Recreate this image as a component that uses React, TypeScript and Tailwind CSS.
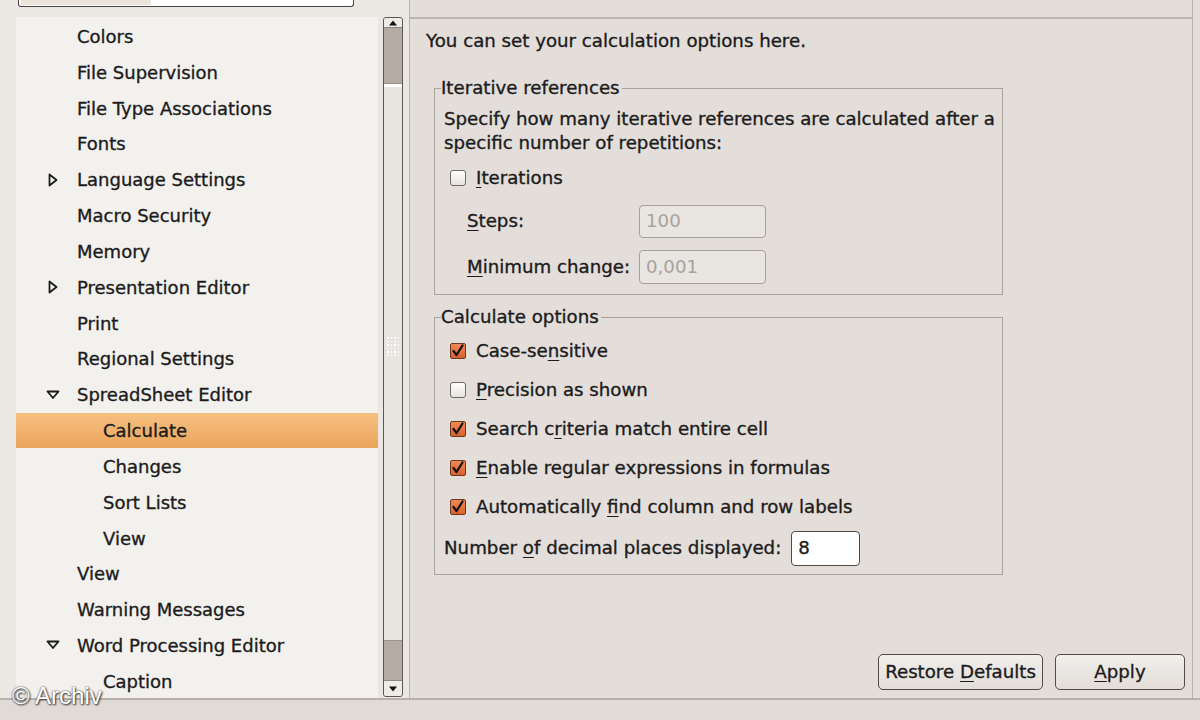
import React from "react";

const treeItems: { label: string; level: number; exp?: "right" | "down"; selected?: boolean }[] = [
  { label: "Colors", level: 1 },
  { label: "File Supervision", level: 1 },
  { label: "File Type Associations", level: 1 },
  { label: "Fonts", level: 1 },
  { label: "Language Settings", level: 1, exp: "right" },
  { label: "Macro Security", level: 1 },
  { label: "Memory", level: 1 },
  { label: "Presentation Editor", level: 1, exp: "right" },
  { label: "Print", level: 1 },
  { label: "Regional Settings", level: 1 },
  { label: "SpreadSheet Editor", level: 1, exp: "down" },
  { label: "Calculate", level: 2, selected: true },
  { label: "Changes", level: 2 },
  { label: "Sort Lists", level: 2 },
  { label: "View", level: 2 },
  { label: "View", level: 1 },
  { label: "Warning Messages", level: 1 },
  { label: "Word Processing Editor", level: 1, exp: "down" },
  { label: "Caption", level: 2 },
];

function Expander({ dir }: { dir: "right" | "down" }) {
  return (
    <svg width="14" height="14" viewBox="0 0 14 14" className="shrink-0">
      {dir === "right" ? (
        <path d="M3.5 1.5 L10.5 7 L3.5 12.5 Z" fill="none" stroke="#1a1a1a" strokeWidth="1.8" strokeLinejoin="round" />
      ) : (
        <path d="M1.5 3.5 L12.5 3.5 L7 10 Z" fill="none" stroke="#1a1a1a" strokeWidth="1.8" strokeLinejoin="round" />
      )}
    </svg>
  );
}

function CheckBox({ checked }: { checked?: boolean }) {
  if (checked) {
    return (
      <div className="w-[16px] h-[16px] shrink-0 rounded-[2px] border border-[#6b3a1e] bg-gradient-to-b from-[#f08a55] to-[#d9612c] flex items-center justify-center">
        <svg width="14" height="14" viewBox="0 0 14 14">
          <path d="M2.5 7 L5.5 11 L11.5 1.5" fill="none" stroke="#111" strokeWidth="2.2" strokeLinecap="round" strokeLinejoin="round" />
        </svg>
      </div>
    );
  }
  return <div className="w-[16px] h-[16px] shrink-0 rounded-[3px] border border-[#6e6a66] bg-gradient-to-b from-[#ffffff] to-[#e6e2de]" />;
}

function U({ children }: { children: React.ReactNode }) {
  return <span className="underline underline-offset-[3px] decoration-1">{children}</span>;
}

function CheckRow({ checked, children }: { checked?: boolean; children: React.ReactNode }) {
  return (
    <div className="flex items-center gap-[10px] pl-[15px] h-[39px]">
      <CheckBox checked={checked} />
      <span>{children}</span>
    </div>
  );
}

export default function App() {
  return (
    <div
      className="w-[1200px] h-[720px] overflow-hidden bg-[#e4deda] text-[#1c1c1c] flex flex-col [-webkit-text-stroke:0.35px]"
      style={{ fontFamily: '"DejaVu Sans", "Noto Sans", sans-serif' }}
    >
      <div className="flex h-[698px]">
        {/* Left pane */}
        <div className="w-[409px] shrink-0 flex flex-col bg-[#ebe7e3]">
          <div className="h-[17px] shrink-0 pl-[18px]">
            <div className="w-[336px] h-[7px] border border-t-0 border-[#4a4846] rounded-b-[3px] bg-white flex">
              <div className="w-[130px] h-[5px] bg-[#ece4da] ml-[2px]" />
            </div>
          </div>
          <div className="flex flex-1 min-h-0">
            <div className="w-[16px] shrink-0" />
            <div className="w-[362px] shrink-0 bg-[#f3f1ee] flex flex-col text-[18px] pt-[1.5px] overflow-hidden">
              {treeItems.map((it, i) => (
                <div
                  key={i}
                  className={`h-[35.83px] shrink-0 flex items-center ${
                    it.selected ? "bg-gradient-to-b from-[#f6bf80] to-[#eba55c]" : ""
                  }`}
                >
                  <div className="w-[44px] shrink-0 flex justify-end">
                    {it.exp ? <Expander dir={it.exp} /> : null}
                  </div>
                  <span className={it.level === 1 ? "ml-[17px]" : "ml-[43px]"}>{it.label}</span>
                </div>
              ))}
            </div>
            <div className="w-[5px] shrink-0" />
            {/* Scrollbar */}
            <div className="w-[20px] shrink-0 mb-[1px] border border-[#5b5754] rounded-[3px] bg-[#b3aba4] flex flex-col overflow-hidden">
              <div className="h-[10px] shrink-0 bg-[#efebe7] border-b border-[#8d8782] flex items-center justify-center">
                <svg width="10" height="6" viewBox="0 0 10 6"><path d="M1 5.5 L5 0.5 L9 5.5 Z" fill="#111" /></svg>
              </div>
              <div className="h-[55px] shrink-0" />
              <div className="h-[558px] shrink-0 bg-[#e8e4e0] border-y border-[#9c958f] flex flex-col">
                <div className="h-[3px] bg-white" />
                <div className="flex-1 flex items-center justify-center pb-[34px]">
                  <div className="grid grid-cols-4 gap-[2px]">
                    {Array.from({ length: 24 }).map((_, k) => (
                      <div key={k} className="w-[1.5px] h-[1.5px] bg-[#fefefe]" />
                    ))}
                  </div>
                </div>
              </div>
              <div className="flex-1" />
              <div className="h-[16px] shrink-0 bg-[#efebe7] border-t border-[#8d8782] flex items-center justify-center">
                <svg width="10" height="6" viewBox="0 0 10 6"><path d="M1 0.5 L5 5.5 L9 0.5 Z" fill="#111" /></svg>
              </div>
            </div>
            <div className="flex-1" />
          </div>
        </div>

        {/* Right pane */}
        <div className="w-[784px] shrink-0 border-l border-r border-[#b9b2ac] flex flex-col text-[18.2px]">
          <div className="h-[19px] shrink-0 border-b-2 border-[#bdb6b0]" />
          <div className="pl-[16px] mt-[10px] h-[24px] leading-[24px]">You can set your calculation options here.</div>

          <fieldset className="ml-[24px] mt-[24px] w-[569px] border border-[#aaa39d] pl-[9px] pb-[1px]">
            <legend className="ml-[-3px] pr-[2px] leading-[22px]">Iterative references</legend>
            <div className="leading-[24px] mt-[8px]">
              Specify how many iterative references are calculated after a
              <br />
              specific number of repetitions:
            </div>
            <div className="flex items-center gap-[10px] pl-[6px] h-[46px]">
              <CheckBox />
              <span><U>I</U>terations</span>
            </div>
            <div className="flex items-center h-[40px]">
              <span className="ml-[23px] w-[172px]"><U>S</U>teps:</span>
              <div className="w-[127px] h-[33px] rounded-[4px] border border-[#a7a09a] bg-[#e9e5e1] text-[#a8a29d] flex items-center pl-[6px] [-webkit-text-stroke:0px]">100</div>
            </div>
            <div className="flex items-center h-[52px]">
              <span className="ml-[23px] w-[172px]"><U>M</U>inimum change:</span>
              <div className="w-[127px] h-[34px] rounded-[4px] border border-[#a7a09a] bg-[#e9e5e1] text-[#a8a29d] flex items-center pl-[6px] [-webkit-text-stroke:0px]">0,001</div>
            </div>
          </fieldset>

          <fieldset className="ml-[24px] mt-[11px] w-[569px] border border-[#aaa39d] pb-[4px]">
            <legend className="ml-[6px] pr-[2px] leading-[22px]">Calculate options</legend>
            <div className="mt-[3px]">
              <CheckRow checked>Case-se<U>n</U>sitive</CheckRow>
              <CheckRow><U>P</U>recision as shown</CheckRow>
              <CheckRow checked>Search c<U>r</U>iteria match entire cell</CheckRow>
              <CheckRow checked><U>E</U>nable regular expressions in formulas</CheckRow>
              <CheckRow checked>Automatically <U>f</U>ind column and row labels</CheckRow>
              <div className="flex items-center pl-[9px] h-[44px]">
                <span>Number <U>o</U>f decimal places displayed:</span>
                <div className="ml-[10px] w-[69px] h-[35px] rounded-[4px] border border-[#4d4a47] bg-white flex items-center pl-[6px]">8</div>
              </div>
            </div>
          </fieldset>

          <div className="flex-1" />
          <div className="flex justify-end gap-[12px] pr-[7px] mb-[8px]">
            <button className="w-[165px] h-[36px] rounded-[5px] border border-[#4f4b48] bg-gradient-to-b from-[#f2efec] to-[#e2ddd8]">
              Restore <U>D</U>efaults
            </button>
            <button className="w-[130px] h-[36px] rounded-[5px] border border-[#4f4b48] bg-gradient-to-b from-[#f2efec] to-[#e2ddd8]">
              <U>A</U>pply
            </button>
          </div>
        </div>
        <div className="flex-1" />
      </div>

      <div className="relative flex-1 border-t-2 border-[#b8b1ab] bg-[#e1dbd7]">
        <div
          className="absolute left-[12px] top-[-16px] text-[24px] text-white leading-none [-webkit-text-stroke:0px]"
          style={{ fontFamily: '"Liberation Sans", Arial, sans-serif', textShadow: "0 0 2px #333, 1px 1px 2px #333" }}
        >
          © Archiv
        </div>
      </div>
    </div>
  );
}
